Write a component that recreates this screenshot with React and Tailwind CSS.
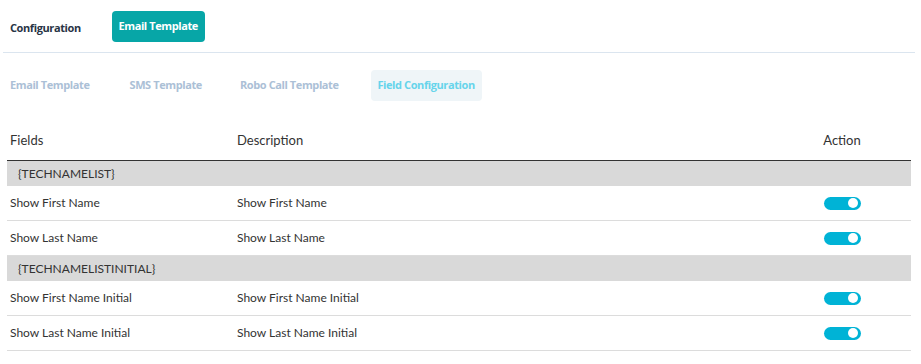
const ROWS = [
  { group: "{TECHNAMELIST}" },
  { field: "Show First Name", desc: "Show First Name" },
  { field: "Show Last Name", desc: "Show Last Name" },
  { group: "{TECHNAMELISTINITIAL}" },
  { field: "Show First Name Initial", desc: "Show First Name Initial" },
  { field: "Show Last Name Initial", desc: "Show Last Name Initial" },
];

const Toggle = () => (
  <span className="inline-flex h-[13px] w-[37px] items-center justify-end rounded-full bg-[#00b3d6] pr-[3px]">
    <span className="h-[10px] w-[10px] rounded-full bg-white" />
  </span>
);

export default function App() {
  return (
    <div className="min-h-screen w-[921px] bg-white font-['Open_Sans',sans-serif]">
      {/* Top nav */}
      <div className="ml-[3px] mr-[6px] flex h-[53px] items-start border-b border-[#dbe5ef] pt-[11px]">
        <span className="ml-[7px] mt-[9px] text-[11px] font-bold tracking-[-0.4px] text-[#283445]">
          Configuration
        </span>
        <button className="ml-[31px] h-[31px] w-[93px] rounded-[4px] bg-[#07a6a7] text-[11px] font-bold tracking-[-0.4px] text-white">
          Email Template
        </button>
      </div>

      {/* Sub tabs */}
      <div className="mt-[17px] flex h-[31px] items-center text-[11px] font-bold tracking-[-0.4px] text-[#abc0d6]">
        <span className="ml-[10px]">Email Template</span>
        <span className="ml-[40px]">SMS Template</span>
        <span className="ml-[38px]">Robo Call Template</span>
        <span className="ml-[32px] flex h-[31px] w-[111px] items-center justify-center rounded-[4px] bg-[#eff5f8] text-[#66d4eb]">
          Field Configuration
        </span>
      </div>

      {/* Table */}
      <div className="ml-[7px] mt-[21px] w-[904px] font-['Lato',sans-serif] text-[12px] text-[#333]">
        <div className="grid h-[39px] grid-cols-[230px_1fr_138px] items-center border-b-[1.5px] border-[#333] text-[13px]">
          <span className="pl-[3px]">Fields</span>
          <span>Description</span>
          <span className="text-center">Action</span>
        </div>
        {ROWS.map((r, i) =>
          r.group ? (
            <div key={i} className="flex h-[25px] items-center bg-[#d9d9d9] pl-[11px]">
              {r.group}
            </div>
          ) : (
            <div
              key={i}
              className="grid h-[35px] grid-cols-[230px_1fr_138px] items-center border-b border-[#dcdcdc]"
            >
              <span className="pl-[3px]">{r.field}</span>
              <span>{r.desc}</span>
              <span className="flex justify-center">
                <Toggle />
              </span>
            </div>
          )
        )}
      </div>
    </div>
  );
}
